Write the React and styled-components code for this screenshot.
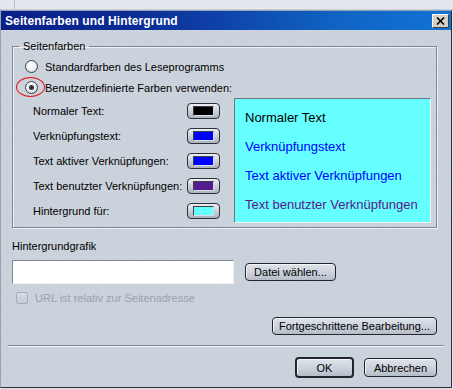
import React from "react";
import styled, { createGlobalStyle } from "styled-components";

const GlobalStyle = createGlobalStyle`
  html, body {
    margin: 0;
    padding: 0;
    background: #dfe3ea;
    font-family: "Liberation Sans", Arial, sans-serif;
    font-size: 11px;
    color: #000;
  }
`;

const Desktop = styled.div`
  width: 453px;
  height: 389px;
  overflow: hidden;
  background: #dfe3ea;
`;

const TopStrip = styled.div`
  height: 10px;
  background:
    linear-gradient(90deg, transparent 14px, #b7bec9 14px, #b7bec9 15px, transparent 15px),
    #e3e7ee;
  border-bottom: 1px solid #c8ced8;
  box-sizing: border-box;
`;

const Window = styled.div`
  width: 452px;
  height: 378px;
  box-sizing: border-box;
  border: 1px solid #2a2f38;
  border-left-color: #9aa3ae;
  border-top-color: #9aa3ae;
  background:
    repeating-linear-gradient(45deg, rgba(255,255,255,0.05) 0 1px, transparent 1px 2px),
    #c9d1da;
  display: flex;
  flex-direction: column;
`;

const TitleBar = styled.div`
  height: 19px;
  display: flex;
  align-items: center;
  justify-content: space-between;
  padding: 0 2px 0 4px;
  background: linear-gradient(90deg, #0a1f88 0%, #0c2c96 30%, #1064c4 75%, #1273d6 100%);
  color: #fff;
  font-weight: bold;
  font-size: 12px;
  letter-spacing: 0.1px;
`;

const CloseButton = styled.div`
  width: 17px;
  height: 14px;
  box-sizing: border-box;
  background: #d4d0c8;
  border: 1px solid #fff;
  border-right-color: #404040;
  border-bottom-color: #404040;
  display: flex;
  align-items: center;
  justify-content: center;
`;

const Content = styled.div`
  flex: 1;
  display: flex;
  flex-direction: column;
  padding: 10px 14px 0 11px;
`;

const Group = styled.fieldset`
  margin: 0;
  padding: 0 5px 4px 0;
  border: 1px solid #7c8793;
  box-shadow: 1px 1px 0 #eef1f5, inset 1px 1px 0 #eef1f5;
  border-radius: 0;
  min-width: 0;
`;

const Legend = styled.legend`
  margin-left: 6px;
  padding: 0 4px;
  font-size: 11px;
  line-height: 13px;
`;

const RadioRow = styled.label`
  height: 21px;
  margin-top: ${(p) => (p.$first ? 3 : 0)}px;
  display: flex;
  align-items: center;
  gap: 7px;
  padding-left: 12px;
  position: relative;
`;

const RadioCircle = styled.span`
  width: 13px;
  height: 13px;
  box-sizing: border-box;
  border-radius: 50%;
  border: 1px solid #3b3f46;
  background: radial-gradient(circle at 40% 35%, #ffffff 0%, #eef0f3 50%, #b9c0c9 100%);
  display: flex;
  align-items: center;
  justify-content: center;
  &::after {
    content: "";
    width: 5px;
    height: 5px;
    border-radius: 50%;
    background: ${(p) => (p.$checked ? "#30343a" : "transparent")};
  }
`;

const RedRing = styled.span`
  position: absolute;
  left: 3px;
  top: 0;
  width: 29px;
  height: 20px;
  border: 1px solid #e4141b;
  border-radius: 50%;
  box-sizing: border-box;
`;

const Main = styled.div`
  display: flex;
  gap: 14px;
  margin-left: 20px;
`;

const ColorList = styled.div`
  width: 187px;
  display: flex;
  flex-direction: column;
`;

const ColorRow = styled.div`
  height: 25px;
  display: flex;
  align-items: center;
  justify-content: space-between;
`;

const Swatch = styled.div`
  width: 33px;
  height: 16px;
  box-sizing: border-box;
  border: 1px solid #2d3138;
  border-radius: 4px;
  background: linear-gradient(180deg, #eceff3, #aab2bd);
  padding: 2px 5px;
  display: flex;
  &::after {
    content: "";
    flex: 1;
    background: ${(p) => p.$color};
    border: 1px solid #3c4049;
    border-right-color: #d9dee4;
    border-bottom-color: #d9dee4;
  }
`;

const Preview = styled.div`
  width: 197px;
  height: 125px;
  box-sizing: border-box;
  background: #66ffff;
  border: 1px solid #6b7580;
  border-right-color: #f2f4f7;
  border-bottom-color: #f2f4f7;
  padding: 4px 0 0 10px;
  display: flex;
  flex-direction: column;
`;

const PreviewLine = styled.div`
  height: 29px;
  line-height: 29px;
  font-size: 13px;
  color: ${(p) => p.$color};
  white-space: nowrap;
`;

const FieldLabel = styled.div`
  margin-top: 11px;
  line-height: 14px;
`;

const FileRow = styled.div`
  margin-top: 7px;
  display: flex;
  align-items: center;
  gap: 11px;
`;

const TextInput = styled.div`
  width: 222px;
  height: 24px;
  box-sizing: border-box;
  background: #fff;
  border: 1px solid #7c8793;
  border-right-color: #f0f2f5;
  border-bottom-color: #f0f2f5;
`;

const Button = styled.div`
  width: ${(p) => p.$w}px;
  height: ${(p) => p.$h || 18}px;
  box-sizing: border-box;
  border: ${(p) => (p.$default ? 2 : 1)}px solid #22262c;
  border-radius: 4px;
  background: linear-gradient(180deg, #dfe4ea 0%, #c9d0d9 60%, #b4bcc7 100%);
  box-shadow: inset 1px 1px 0 #f3f5f8;
  display: flex;
  align-items: center;
  justify-content: center;
  font-size: 11px;
  white-space: nowrap;
`;

const CheckRow = styled.div`
  margin-top: 7px;
  height: 14px;
  display: flex;
  align-items: center;
  gap: 7px;
  padding-left: 4px;
  color: #9aa2ad;
`;

const CheckBox = styled.span`
  width: 12px;
  height: 12px;
  box-sizing: border-box;
  border: 1px solid #a7afb9;
  border-radius: 2px;
  background: linear-gradient(180deg, #d6dce3, #c4ccd5);
`;

const AdvancedRow = styled.div`
  margin-top: 12px;
  display: flex;
  justify-content: flex-end;
`;

const Separator = styled.div`
  margin: 10px 0 0 -4px;
  width: 436px;
  height: 1px;
  background: #7c8793;
  border-bottom: 1px solid #f2f4f7;
`;

const ButtonBar = styled.div`
  margin-top: 10px;
  display: flex;
  justify-content: flex-end;
  align-items: center;
  gap: 10px;
`;

const colors = [
  { label: "Normaler Text:", color: "#000000" },
  { label: "Verknüpfungstext:", color: "#0000ff" },
  { label: "Text aktiver Verknüpfungen:", color: "#0000ff" },
  { label: "Text benutzter Verknüpfungen:", color: "#551a8b" },
  { label: "Hintergrund für:", color: "#66ffff" },
];

export default function App() {
  return (
    <Desktop>
      <GlobalStyle />
      <TopStrip />
      <Window>
        <TitleBar>
          <span>Seitenfarben und Hintergrund</span>
          <CloseButton>
            <svg width="9" height="8" viewBox="0 0 9 8">
              <path d="M1 0.5 L8 7.5 M8 0.5 L1 7.5" stroke="#000" strokeWidth="1.6" />
            </svg>
          </CloseButton>
        </TitleBar>
        <Content>
          <Group>
            <Legend>Seitenfarben</Legend>
            <RadioRow $first>
              <RadioCircle />
              Standardfarben des Leseprogramms
            </RadioRow>
            <RadioRow>
              <RedRing />
              <RadioCircle $checked />
              Benutzerdefinierte Farben verwenden:
            </RadioRow>
            <Main>
              <ColorList>
                {colors.map((c) => (
                  <ColorRow key={c.label}>
                    <span>{c.label}</span>
                    <Swatch $color={c.color} />
                  </ColorRow>
                ))}
              </ColorList>
              <Preview>
                <PreviewLine $color="#000">Normaler Text</PreviewLine>
                <PreviewLine $color="#0000ff">Verknüpfungstext</PreviewLine>
                <PreviewLine $color="#0000ff">Text aktiver Verknüpfungen</PreviewLine>
                <PreviewLine $color="#551a8b">Text benutzter Verknüpfungen</PreviewLine>
              </Preview>
            </Main>
          </Group>
          <FieldLabel>Hintergrundgrafik</FieldLabel>
          <FileRow>
            <TextInput />
            <Button $w={91} $h={18}>Datei wählen...</Button>
          </FileRow>
          <CheckRow>
            <CheckBox />
            URL ist relativ zur Seitenadresse
          </CheckRow>
          <AdvancedRow>
            <Button $w={165}>Fortgeschrittene Bearbeitung...</Button>
          </AdvancedRow>
          <Separator />
          <ButtonBar>
            <Button $w={59} $h={21} $default>OK</Button>
            <Button $w={73} $h={19}>Abbrechen</Button>
          </ButtonBar>
        </Content>
      </Window>
    </Desktop>
  );
}
